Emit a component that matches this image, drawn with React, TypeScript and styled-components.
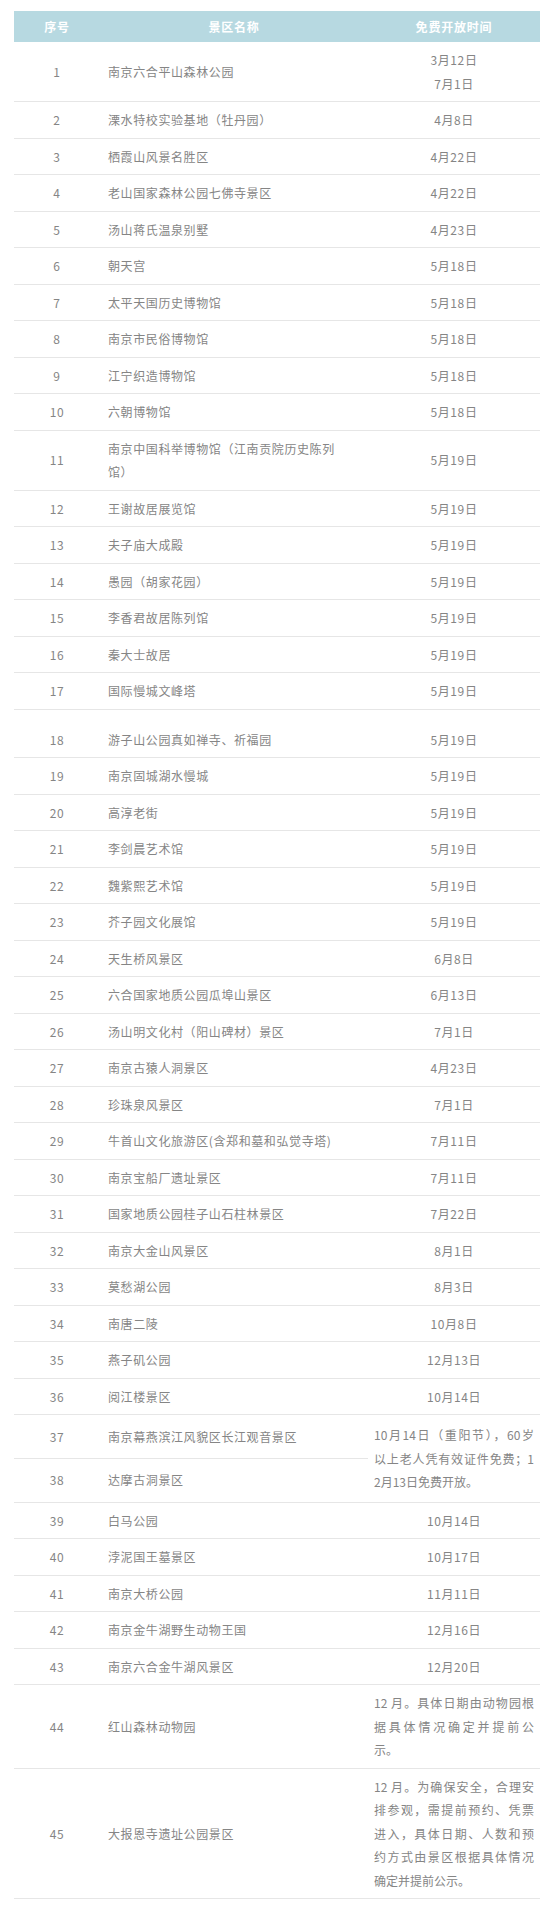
import React from 'react';
import styled, { createGlobalStyle } from 'styled-components';

const GlobalStyle = createGlobalStyle`
  html, body {
    margin: 0;
    padding: 0;
    background: #ffffff;
  }
  body {
    font-family: "Noto Sans CJK SC", "Noto Sans", sans-serif;
  }
`;

const Page = styled.div`
  padding: 11px 13px 13px 14px;
`;

const Table = styled.table`
  width: 526px;
  border-collapse: collapse;
  table-layout: fixed;
  font-size: 12px;
  color: #858585;
`;

const HeadCell = styled.th<{ $width: number }>`
  width: ${p => p.$width}px;
  height: 31px;
  padding: 0;
  background: #b7d9e1;
  color: #ffffff;
  font-size: 12px;
  font-weight: bold;
  letter-spacing: 0.8px;
  text-align: center;
`;

const Cell = styled.td`
  padding: 6px 0;
  line-height: 23.5px;
  border-bottom: 1px solid #e6e6e6;
  letter-spacing: 0.6px;
  vertical-align: middle;
`;

const NumCell = styled(Cell)<{ $spacer?: boolean }>`
  text-align: center;
  padding-top: ${p => (p.$spacer ? '18px' : '6px')};
`;

const NameCell = styled(Cell)<{ $spacer?: boolean }>`
  padding-left: 8px;
  padding-right: 28px;
  padding-top: ${p => (p.$spacer ? '18px' : '6px')};
`;

const DateCell = styled(Cell)<{ $long?: boolean; $spacer?: boolean }>`
  text-align: center;
  padding-left: 6px;
  padding-right: 6px;
  padding-top: ${p => (p.$spacer ? '18px' : p.$long ? '8px' : '6px')};
  padding-bottom: ${p => (p.$long ? '8px' : '6px')};
`;

const DateLine = styled.div<{ $fill: boolean }>`
  white-space: pre;
  letter-spacing: 0;
  text-align: left;
  text-align-last: ${p => (p.$fill ? 'justify' : 'left')};
`;

type Item = {
  no: number;
  name: string;
  dates: string[];
  long?: boolean;
  span?: number;
  merged?: boolean;
  spacer?: boolean;
};

const items: Item[] = [
  { no: 1, name: '南京六合平山森林公园', dates: ['3月12日', '7月1日'] },
  { no: 2, name: '溧水特校实验基地（牡丹园）', dates: ['4月8日'] },
  { no: 3, name: '栖霞山风景名胜区', dates: ['4月22日'] },
  { no: 4, name: '老山国家森林公园七佛寺景区', dates: ['4月22日'] },
  { no: 5, name: '汤山蒋氏温泉别墅', dates: ['4月23日'] },
  { no: 6, name: '朝天宫', dates: ['5月18日'] },
  { no: 7, name: '太平天国历史博物馆', dates: ['5月18日'] },
  { no: 8, name: '南京市民俗博物馆', dates: ['5月18日'] },
  { no: 9, name: '江宁织造博物馆', dates: ['5月18日'] },
  { no: 10, name: '六朝博物馆', dates: ['5月18日'] },
  { no: 11, name: '南京中国科举博物馆（江南贡院历史陈列馆）', dates: ['5月19日'] },
  { no: 12, name: '王谢故居展览馆', dates: ['5月19日'] },
  { no: 13, name: '夫子庙大成殿', dates: ['5月19日'] },
  { no: 14, name: '愚园（胡家花园）', dates: ['5月19日'] },
  { no: 15, name: '李香君故居陈列馆', dates: ['5月19日'] },
  { no: 16, name: '秦大士故居', dates: ['5月19日'] },
  { no: 17, name: '国际慢城文峰塔', dates: ['5月19日'] },
  { no: 18, name: '游子山公园真如禅寺、祈福园', dates: ['5月19日'], spacer: true },
  { no: 19, name: '南京固城湖水慢城', dates: ['5月19日'] },
  { no: 20, name: '高淳老街', dates: ['5月19日'] },
  { no: 21, name: '李剑晨艺术馆', dates: ['5月19日'] },
  { no: 22, name: '魏紫熙艺术馆', dates: ['5月19日'] },
  { no: 23, name: '芥子园文化展馆', dates: ['5月19日'] },
  { no: 24, name: '天生桥风景区', dates: ['6月8日'] },
  { no: 25, name: '六合国家地质公园瓜埠山景区', dates: ['6月13日'] },
  { no: 26, name: '汤山明文化村（阳山碑材）景区', dates: ['7月1日'] },
  { no: 27, name: '南京古猿人洞景区', dates: ['4月23日'] },
  { no: 28, name: '珍珠泉风景区', dates: ['7月1日'] },
  { no: 29, name: '牛首山文化旅游区(含郑和墓和弘觉寺塔)', dates: ['7月11日'] },
  { no: 30, name: '南京宝船厂遗址景区', dates: ['7月11日'] },
  { no: 31, name: '国家地质公园桂子山石柱林景区', dates: ['7月22日'] },
  { no: 32, name: '南京大金山风景区', dates: ['8月1日'] },
  { no: 33, name: '莫愁湖公园', dates: ['8月3日'] },
  { no: 34, name: '南唐二陵', dates: ['10月8日'] },
  { no: 35, name: '燕子矶公园', dates: ['12月13日'] },
  { no: 36, name: '阅江楼景区', dates: ['10月14日'] },
  {
    no: 37,
    name: '南京幕燕滨江风貌区长江观音景区',
    dates: ['10月14日（重阳节），60岁', '以上老人凭有效证件免费；1', '2月13日免费开放。'],
    long: true,
    span: 2,
  },
  { no: 38, name: '达摩古洞景区', dates: [], merged: true },
  { no: 39, name: '白马公园', dates: ['10月14日'] },
  { no: 40, name: '浡泥国王墓景区', dates: ['10月17日'] },
  { no: 41, name: '南京大桥公园', dates: ['11月11日'] },
  { no: 42, name: '南京金牛湖野生动物王国', dates: ['12月16日'] },
  { no: 43, name: '南京六合金牛湖风景区', dates: ['12月20日'] },
  {
    no: 44,
    name: '红山森林动物园',
    dates: ['12 月。具体日期由动物园根', '据具体情况确定并提前公', '示。'],
    long: true,
  },
  {
    no: 45,
    name: '大报恩寺遗址公园景区',
    dates: [
      '12 月。为确保安全，合理安',
      '排参观，需提前预约、凭票',
      '进入，具体日期、人数和预',
      '约方式由景区根据具体情况',
      '确定并提前公示。',
    ],
    long: true,
  },
];

const App: React.FC = () => {
  return (
    <Page>
      <GlobalStyle />
      <Table>
        <thead>
          <tr>
            <HeadCell $width={86}>序号</HeadCell>
            <HeadCell $width={268}>景区名称</HeadCell>
            <HeadCell $width={172}>免费开放时间</HeadCell>
          </tr>
        </thead>
        <tbody>
          {items.map(item => (
            <tr key={item.no}>
              <NumCell $spacer={item.spacer}>{item.no}</NumCell>
              <NameCell $spacer={item.spacer}>{item.name}</NameCell>
              {!item.merged && (
                <DateCell rowSpan={item.span} $long={item.span ? true : false} $spacer={item.spacer}>
                  {item.long
                    ? item.dates.map((line, i) => (
                        <DateLine key={i} $fill={i < item.dates.length - 1}>
                          {line}
                        </DateLine>
                      ))
                    : item.dates.map((d, i) => <div key={i}>{d}</div>)}
                </DateCell>
              )}
            </tr>
          ))}
        </tbody>
      </Table>
    </Page>
  );
};

export default App;
